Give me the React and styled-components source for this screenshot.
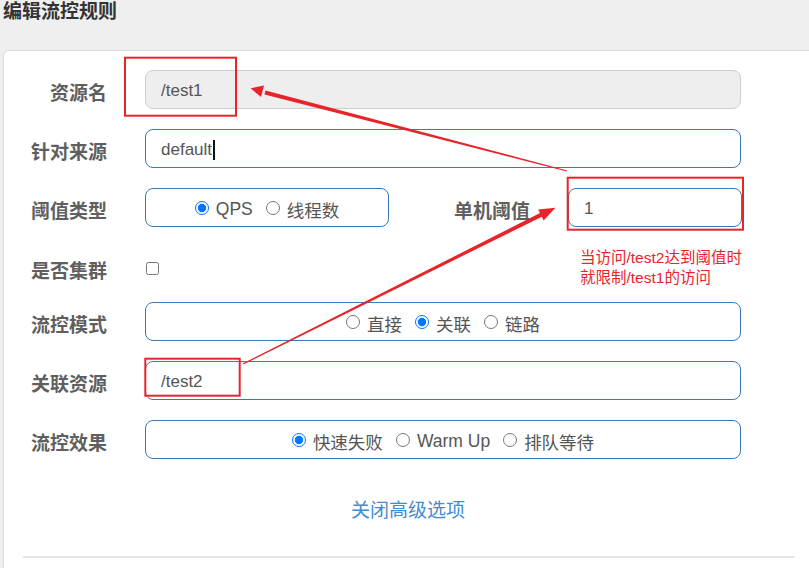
import React from "react";
import styled, { createGlobalStyle } from "styled-components";

const GlobalStyle = createGlobalStyle`
  html, body {
    margin: 0;
    padding: 0;
    background: #efefef;
    overflow: hidden;
  }
  body {
    font-family: "Liberation Sans", "Noto Sans CJK SC", sans-serif;
  }
`;

const Page = styled.div`
  position: relative;
  width: 809px;
  height: 568px;
  overflow: hidden;
`;

const Title = styled.div`
  height: 50px;
  padding-left: 3px;
  box-sizing: border-box;
  font-size: 19px;
  font-weight: bold;
  line-height: 24px;
  color: #333;
`;

const Panel = styled.div`
  margin-left: 3px;
  width: 809px;
  box-sizing: border-box;
  background: #fff;
  border: 1px solid #dcdcdc;
  border-right: none;
  border-radius: 6px 0 0 0;
  padding-top: 19px;
  height: 560px;
`;

const Form = styled.div`
  display: flex;
  flex-direction: column;
  gap: 20px;
`;

const Row = styled.div`
  display: flex;
  align-items: center;
  height: ${(p) => p.$h || 39}px;
  padding-top: ${(p) => p.$pt || 0}px;
  box-sizing: border-box;
`;

const Label = styled.div`
  width: ${(p) => p.$w || 103}px;
  padding-top: 3px;
  text-align: right;
  font-size: 19px;
  font-weight: bold;
  color: #5f5f5f;
  flex-shrink: 0;
`;

const Field = styled.div`
  margin-left: 38px;
  width: ${(p) => p.$w || 596}px;
  height: 39px;
  box-sizing: border-box;
  border: 1px solid ${(p) => (p.$readonly ? "#cfcfcf" : "#3a78b6")};
  background: ${(p) => (p.$readonly ? "#eeeeee" : "#fff")};
  border-radius: 8px;
  padding: 3px 15px 0;
  display: flex;
  align-items: center;
  justify-content: ${(p) => (p.$center ? "center" : "flex-start")};
  font-size: 17px;
  color: #555;
  flex-shrink: 0;
`;

const Caret = styled.span`
  display: inline-block;
  width: 2px;
  height: 20px;
  background: #111;
  margin-left: 1px;
`;

const Option = styled.label`
  display: inline-flex;
  align-items: center;
  margin-right: ${(p) => (p.$last ? 0 : 13)}px;
  font-size: 17.5px;
  color: #555;
`;

const Radio = styled.input.attrs({ type: "radio" })`
  width: 14px;
  height: 14px;
  margin: 0 7px 2px 0;
  accent-color: #0075ff;
`;

const Check = styled.input.attrs({ type: "checkbox" })`
  width: 13px;
  height: 13px;
  margin: 0 0 0 39px;
`;

const LinkRow = styled.div`
  margin-top: 41px;
  text-align: center;
  font-size: 19px;
  line-height: 22px;
  color: #3f8dd3;
  cursor: pointer;
`;

const Divider = styled.div`
  margin: 34px 17px 0 19px;
  height: 2px;
  background: #e5e5e5;
`;

const Overlay = styled.svg`
  position: absolute;
  left: 0;
  top: 0;
  pointer-events: none;
`;

const Note = styled.div`
  position: absolute;
  left: 580px;
  top: 248px;
  font-size: 15.5px;
  line-height: 20px;
  color: #e8242b;
`;

function RadioGroup({ name, options, checked }) {
  return options.map((o, i) => (
    <Option key={o} $last={i === options.length - 1}>
      <Radio name={name} defaultChecked={o === checked} />
      {o}
    </Option>
  ));
}

const RED = "#e8242b";

export default function App() {
  return (
    <Page>
      <GlobalStyle />
      <Title>编辑流控规则</Title>
      <Panel>
        <Form>
          <Row>
            <Label>资源名</Label>
            <Field $readonly>/test1</Field>
          </Row>
          <Row>
            <Label>针对来源</Label>
            <Field>
              default
              <Caret />
            </Field>
          </Row>
          <Row>
            <Label>阈值类型</Label>
            <Field $w={244} $center>
              <RadioGroup name="grade" options={["QPS", "线程数"]} checked="QPS" />
            </Field>
            <Label $w={141}>单机阈值</Label>
            <Field $w={174}>1</Field>
          </Row>
          <Row $h={35} $pt={7}>
            <Label>是否集群</Label>
            <Check />
          </Row>
          <Row>
            <Label>流控模式</Label>
            <Field $center>
              <RadioGroup name="strategy" options={["直接", "关联", "链路"]} checked="关联" />
            </Field>
          </Row>
          <Row>
            <Label>关联资源</Label>
            <Field>/test2</Field>
          </Row>
          <Row>
            <Label>流控效果</Label>
            <Field $center>
              <RadioGroup
                name="behavior"
                options={["快速失败", "Warm Up", "排队等待"]}
                checked="快速失败"
              />
            </Field>
          </Row>
        </Form>
        <LinkRow>关闭高级选项</LinkRow>
        <Divider />
      </Panel>

      <Overlay width="809" height="568" viewBox="0 0 809 568">
        <rect x="125" y="57.7" width="111" height="58" fill="none" stroke={RED} strokeWidth="2" />
        <rect x="567.7" y="177.7" width="175.3" height="52" fill="none" stroke={RED} strokeWidth="2" />
        <rect x="145.3" y="358.7" width="94.4" height="37" fill="none" stroke={RED} strokeWidth="2" />
        {/* arrow to /test1 */}
        <polygon points="567.2,170.4 566.8,171.6 264.5,94.5 265.5,90.5" fill={RED} />
        <polygon points="250.5,88.3 264,85.5 261,97" fill={RED} />
        {/* arrow to threshold */}
        <polygon points="243.3,364.5 242.7,363.5 540.5,212.8 542.3,216.4" fill={RED} />
        <polygon points="555.5,207.8 538.2,209.6 543.6,220.4" fill={RED} />
      </Overlay>
      <Note>
        当访问/test2达到阈值时
        <br />
        就限制/test1的访问
      </Note>
    </Page>
  );
}
